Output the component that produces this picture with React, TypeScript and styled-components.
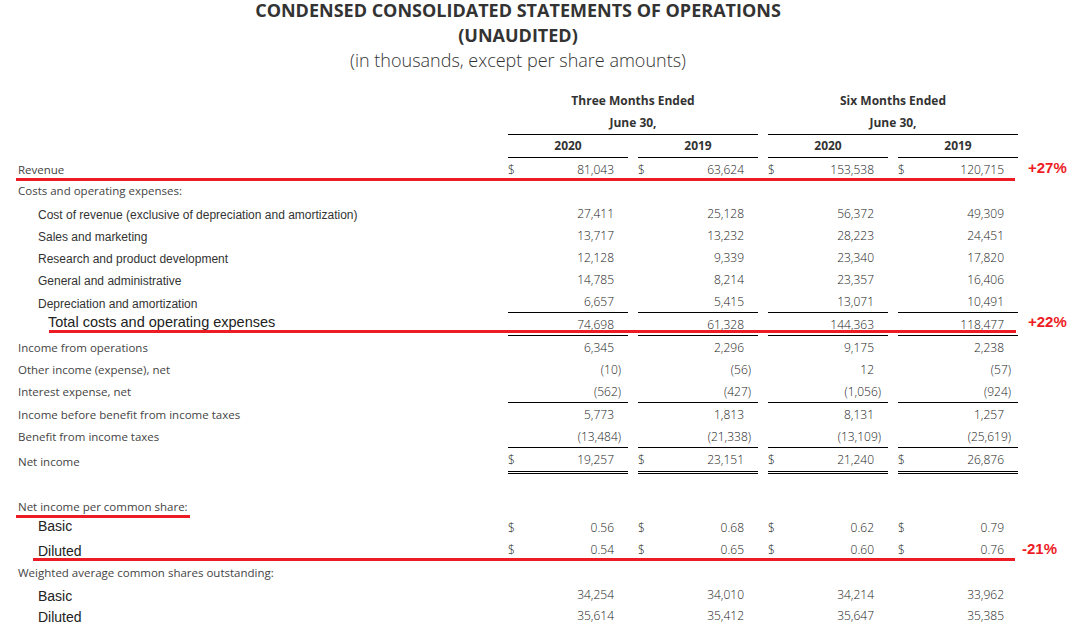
import React from 'react';
import styled, { createGlobalStyle } from 'styled-components';

type Kind = 'main' | 'sub' | 'total' | 'share';
type Rule = 'single' | 'double';

interface Mark {
  text: string;
  dx: number;
  dy: number;
}

interface RedLine {
  left: number;
  width: number;
  top: number;
}

interface Line {
  label: string;
  kind: Kind;
  h: number;
  lift?: number;
  values?: string[];
  dollar?: boolean;
  rule?: Rule;
  mark?: Mark;
  red?: RedLine;
}

const lines: Line[] = [
  {
    label: 'Revenue', kind: 'main', h: 22, dollar: true,
    values: ['81,043', '63,624', '153,538', '120,715'],
    mark: { text: '+27%', dx: 0, dy: -2 },
    red: { left: 16, width: 999, top: 20 },
  },
  { label: 'Costs and operating expenses:', kind: 'main', h: 22, lift: 1 },
  { label: 'Cost of revenue (exclusive of depreciation and amortization)', kind: 'sub', h: 22, lift: -2, values: ['27,411', '25,128', '56,372', '49,309'] },
  { label: 'Sales and marketing', kind: 'sub', h: 22, lift: -2, values: ['13,717', '13,232', '28,223', '24,451'] },
  { label: 'Research and product development', kind: 'sub', h: 22, lift: -2, values: ['12,128', '9,339', '23,340', '17,820'] },
  { label: 'General and administrative', kind: 'sub', h: 22, lift: -2, values: ['14,785', '8,214', '23,357', '16,406'] },
  { label: 'Depreciation and amortization', kind: 'sub', h: 23, lift: -2, rule: 'single', values: ['6,657', '5,415', '13,071', '10,491'] },
  {
    label: 'Total costs and operating expenses', kind: 'total', h: 23, lift: 3, rule: 'single',
    values: ['74,698', '61,328', '144,363', '118,477'],
    mark: { text: '+22%', dx: 0, dy: -3 },
    red: { left: 49, width: 967, top: 17 },
  },
  { label: 'Income from operations', kind: 'main', h: 22, values: ['6,345', '2,296', '9,175', '2,238'] },
  { label: 'Other income (expense), net', kind: 'main', h: 22, values: ['(10)', '(56)', '12', '(57)'] },
  { label: 'Interest expense, net', kind: 'main', h: 23, rule: 'single', values: ['(562)', '(427)', '(1,056)', '(924)'] },
  { label: 'Income before benefit from income taxes', kind: 'main', h: 22, values: ['5,773', '1,813', '8,131', '1,257'] },
  { label: 'Benefit from income taxes', kind: 'main', h: 23, rule: 'single', values: ['(13,484)', '(21,338)', '(13,109)', '(25,619)'] },
  { label: 'Net income', kind: 'main', h: 26, rule: 'double', dollar: true, values: ['19,257', '23,151', '21,240', '26,876'] },
];

const shareLines: Line[] = [
  {
    label: 'Net income per common share:', kind: 'main', h: 20, lift: 1,
    red: { left: 16, width: 174, top: 18 },
  },
  { label: 'Basic', kind: 'share', h: 21, lift: 2, dollar: true, values: ['0.56', '0.68', '0.62', '0.79'] },
  {
    label: 'Diluted', kind: 'share', h: 22, lift: -2, dollar: true,
    values: ['0.54', '0.65', '0.60', '0.76'],
    mark: { text: '-21%', dx: -6, dy: -1 },
    red: { left: 33, width: 982, top: 20 },
  },
  { label: 'Weighted average common shares outstanding:', kind: 'main', h: 24 },
  { label: 'Basic', kind: 'share', h: 21, lift: -1, values: ['34,254', '34,010', '34,214', '33,962'] },
  { label: 'Diluted', kind: 'share', h: 21, lift: -1, values: ['35,614', '35,412', '35,647', '35,385'] },
];

function Row({ line }: { line: Line }) {
  return (
    <Grid $h={line.h}>
      <Label $kind={line.kind} $lift={line.lift ?? 0}>{line.label}</Label>
      {line.values
        ? line.values.map((v, i) => {
            const neg = v.startsWith('(');
            return (
              <Amount key={i} $rule={line.rule} $neg={neg}>
                <span>{line.dollar ? '$' : ''}</span>
                <span>{v}</span>
              </Amount>
            );
          })
        : [0, 1, 2, 3].map((i) => <Amount key={i} />)}
      <Change $dx={line.mark?.dx ?? 0} $dy={line.mark?.dy ?? 0}>
        {line.mark?.text}
      </Change>
      {line.red && (
        <Underline style={{ left: line.red.left, width: line.red.width, top: line.red.top }} />
      )}
    </Grid>
  );
}

function App() {
  return (
    <Page>
      <GlobalStyle />
      <Heading>
        <TitleLine>CONDENSED CONSOLIDATED STATEMENTS OF OPERATIONS</TitleLine>
        <TitleLine>(UNAUDITED)</TitleLine>
        <TitleLine $light>(in thousands, except per share amounts)</TitleLine>
      </Heading>

      <Table>
        <Grid $h={45}>
          <span />
          <Period>
            <div>Three Months Ended</div>
            <div>June 30,</div>
          </Period>
          <Period>
            <div>Six Months Ended</div>
            <div>June 30,</div>
          </Period>
        </Grid>
        <Grid $h={23}>
          <span />
          <Year>2020</Year>
          <Year>2019</Year>
          <Year>2020</Year>
          <Year>2019</Year>
        </Grid>
        {lines.map((l, i) => (
          <Row key={i} line={l} />
        ))}
        <Spacer />
        {shareLines.map((l, i) => (
          <Row key={i} line={l} />
        ))}
      </Table>
    </Page>
  );
}

export default App;

const GlobalStyle = createGlobalStyle`
  html, body {
    margin: 0;
    padding: 0;
    background: #fff;
  }
  body {
    font-family: "Open Sans", "Liberation Sans", sans-serif;
    color: #333;
  }
`;

const Page = styled.div`
  width: 1092px;
  height: 632px;
  overflow: hidden;
`;

const Heading = styled.header`
  width: 1036px;
  display: flex;
  flex-direction: column;
  gap: 4px;
  text-align: center;
  color: #333;
`;

const TitleLine = styled.div<{ $light?: boolean }>`
  font-size: 18px;
  line-height: 21px;
  font-weight: ${(p) => (p.$light ? 300 : 700)};
`;

const Table = styled.div`
  margin-top: 19px;
`;

const Grid = styled.div<{ $h: number }>`
  position: relative;
  display: grid;
  grid-template-columns: 498px repeat(4, 120px) 1fr;
  column-gap: 10px;
  height: ${(p) => p.$h}px;
`;

const Period = styled.div`
  grid-column: span 2;
  border-bottom: 1px solid #000;
  text-align: center;
  font-size: 12px;
  font-weight: 700;
  line-height: 22px;
  color: #333;
`;

const Year = styled.div`
  border-bottom: 1px solid #000;
  text-align: center;
  font-size: 12px;
  font-weight: 700;
  line-height: 22px;
  color: #333;
`;

const labelFont: Record<Kind, string> = {
  main: `font-family: "Open Sans", sans-serif; font-size: 11.5px; font-weight: 400; color: #444; padding-left: 18px;`,
  sub: `font-family: "Liberation Sans", Arial, sans-serif; font-size: 12px; color: #333; padding-left: 38px;`,
  total: `font-family: "Liberation Sans", Arial, sans-serif; font-size: 14.5px; color: #222; padding-left: 48px;`,
  share: `font-family: "Liberation Sans", Arial, sans-serif; font-size: 14px; color: #222; padding-left: 38px;`,
};

const Label = styled.div<{ $kind: Kind; $lift: number }>`
  box-sizing: border-box;
  display: flex;
  align-items: center;
  white-space: nowrap;
  padding-bottom: ${(p) => Math.max(p.$lift, 0) * 2}px;
  padding-top: ${(p) => Math.max(-p.$lift, 0) * 2}px;
  ${(p) => labelFont[p.$kind]}
`;

const Amount = styled.div<{ $rule?: Rule; $neg?: boolean }>`
  box-sizing: border-box;
  display: flex;
  align-items: center;
  justify-content: space-between;
  padding-right: ${(p) => (p.$neg ? 7 : 14)}px;
  font-size: 12px;
  font-weight: 300;
  color: #222;
  border-bottom: ${(p) =>
    p.$rule === 'double' ? '3px double #000' : p.$rule === 'single' ? '1px solid #000' : 'none'};
`;

const Change = styled.div<{ $dx: number; $dy: number }>`
  display: flex;
  align-items: center;
  margin-left: ${(p) => p.$dx}px;
  margin-top: ${(p) => p.$dy * 2}px;
  font-family: "Liberation Sans", Arial, sans-serif;
  font-size: 15px;
  font-weight: 700;
  color: #ed1c24;
`;

const Underline = styled.div`
  position: absolute;
  height: 3px;
  background: #ed1c24;
`;

const Spacer = styled.div`
  height: 23px;
`;
